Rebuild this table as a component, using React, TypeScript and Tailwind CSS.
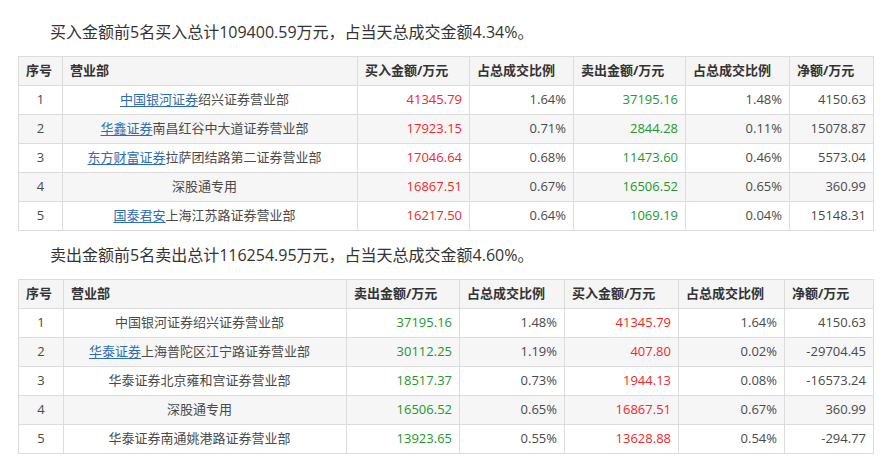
import React from 'react';

type Row = {
  idx: number;
  link?: string;
  rest: string;
  a: string;
  ap: string;
  b: string;
  bp: string;
  net: string;
};

const buyRows: Row[] = [
  { idx: 1, link: '中国银河证券', rest: '绍兴证券营业部', a: '41345.79', ap: '1.64%', b: '37195.16', bp: '1.48%', net: '4150.63' },
  { idx: 2, link: '华鑫证券', rest: '南昌红谷中大道证券营业部', a: '17923.15', ap: '0.71%', b: '2844.28', bp: '0.11%', net: '15078.87' },
  { idx: 3, link: '东方财富证券', rest: '拉萨团结路第二证券营业部', a: '17046.64', ap: '0.68%', b: '11473.60', bp: '0.46%', net: '5573.04' },
  { idx: 4, rest: '深股通专用', a: '16867.51', ap: '0.67%', b: '16506.52', bp: '0.65%', net: '360.99' },
  { idx: 5, link: '国泰君安', rest: '上海江苏路证券营业部', a: '16217.50', ap: '0.64%', b: '1069.19', bp: '0.04%', net: '15148.31' },
];

const sellRows: Row[] = [
  { idx: 1, rest: '中国银河证券绍兴证券营业部', a: '37195.16', ap: '1.48%', b: '41345.79', bp: '1.64%', net: '4150.63' },
  { idx: 2, link: '华泰证券', rest: '上海普陀区江宁路证券营业部', a: '30112.25', ap: '1.19%', b: '407.80', bp: '0.02%', net: '-29704.45' },
  { idx: 3, rest: '华泰证券北京雍和宫证券营业部', a: '18517.37', ap: '0.73%', b: '1944.13', bp: '0.08%', net: '-16573.24' },
  { idx: 4, rest: '深股通专用', a: '16506.52', ap: '0.65%', b: '16867.51', bp: '0.67%', net: '360.99' },
  { idx: 5, rest: '华泰证券南通姚港路证券营业部', a: '13923.65', ap: '0.55%', b: '13628.88', bp: '0.54%', net: '-294.77' },
];

const RED = 'text-[#f32828]';
const GREEN = 'text-[#22992b]';

function Table({
  rows,
  widths,
  first,
  second,
  firstColor,
  secondColor,
}: {
  rows: Row[];
  widths: number[];
  first: string;
  second: string;
  firstColor: string;
  secondColor: string;
}) {
  const th = 'border border-[#dcdcdc] px-[7px] text-left font-bold text-[13px] text-[#333]';
  const td = 'border border-[#dcdcdc] px-[7px] text-[13px] text-[#4a4a4a]';
  return (
    <table className="w-[855px] table-fixed border-collapse">
      <colgroup>
        {widths.map((w, i) => (
          <col key={i} style={{ width: w }} />
        ))}
      </colgroup>
      <thead>
        <tr className="h-[29px] bg-[#f5f5f5]">
          <th className={`${th} text-center`}>序号</th>
          <th className={th}>营业部</th>
          <th className={th}>{first}</th>
          <th className={th}>占总成交比例</th>
          <th className={th}>{second}</th>
          <th className={th}>占总成交比例</th>
          <th className={th}>净额/万元</th>
        </tr>
      </thead>
      <tbody>
        {rows.map((r) => (
          <tr key={r.idx} className={`h-[29px] ${r.idx % 2 === 0 ? 'bg-[#f6f6f6]' : 'bg-white'}`}>
            <td className={`${td} text-center`}>{r.idx}</td>
            <td className={`${td} pr-[18px] text-center whitespace-nowrap`}>
              {r.link && <a className="cursor-pointer text-[#2b6cb5] underline underline-offset-2">{r.link}</a>}
              {r.rest}
            </td>
            <td className={`${td} text-right ${firstColor}`}>{r.a}</td>
            <td className={`${td} text-right`}>{r.ap}</td>
            <td className={`${td} text-right ${secondColor}`}>{r.b}</td>
            <td className={`${td} text-right`}>{r.bp}</td>
            <td className={`${td} text-right`}>{r.net}</td>
          </tr>
        ))}
      </tbody>
    </table>
  );
}

export default function App() {
  return (
    <div
      className="min-h-[464px] w-[893px] bg-white pl-[18px] pt-[20px]"
      style={{ fontFamily: '"Open Sans", "Noto Sans CJK SC", sans-serif' }}
    >
      <p className="mb-[12px] pl-[32px] text-[16px] leading-6 text-[#333]">
        买入金额前5名买入总计109400.59万元，占当天总成交金额4.34%。
      </p>
      <Table
        rows={buyRows}
        widths={[44, 295, 112, 104, 112, 104, 84]}
        first="买入金额/万元"
        second="卖出金额/万元"
        firstColor={RED}
        secondColor={GREEN}
      />
      <p className="mt-[12px] mb-[12px] pl-[32px] text-[16px] leading-6 text-[#333]">
        卖出金额前5名卖出总计116254.95万元，占当天总成交金额4.60%。
      </p>
      <Table
        rows={sellRows}
        widths={[45, 283, 113, 105, 114, 106, 89]}
        first="卖出金额/万元"
        second="买入金额/万元"
        firstColor={GREEN}
        secondColor={RED}
      />
    </div>
  );
}
